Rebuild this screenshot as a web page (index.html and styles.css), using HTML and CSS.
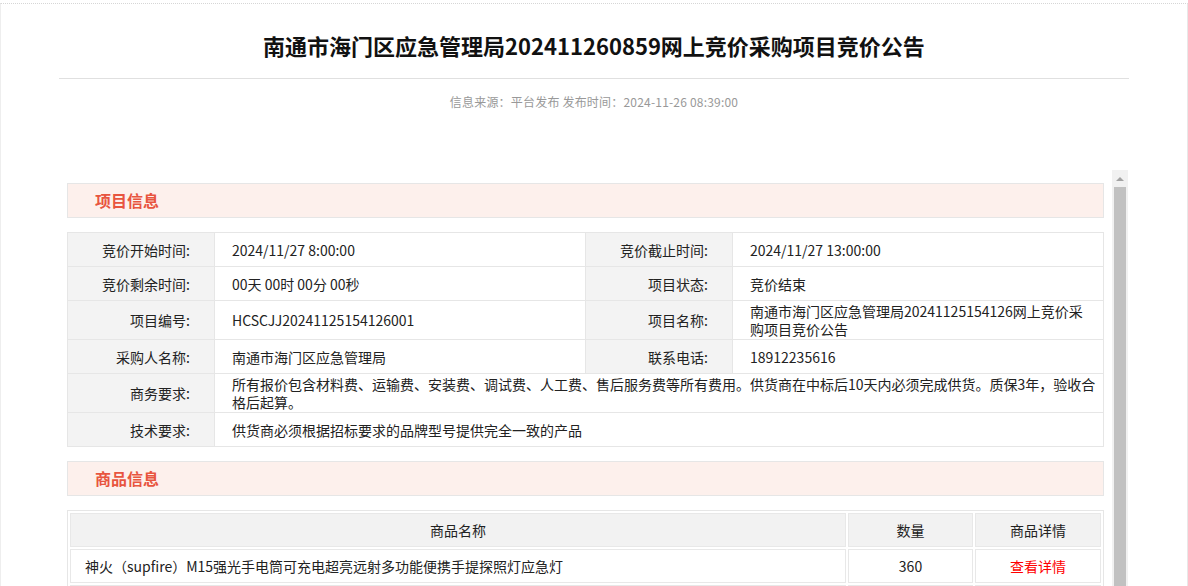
FILE: index.html
```html
<!DOCTYPE html>
<html lang="zh-CN">
<head>
<meta charset="utf-8">
<title>竞价公告</title>
<link rel="stylesheet" href="styles.css">
</head>
<body>
<div class="page">
  <div class="head">
    <h1 class="title">南通市海门区应急管理局202411260859网上竞价采购项目竞价公告</h1>
  </div>
  <div class="meta">信息来源：平台发布 发布时间：2024-11-26 08:39:00</div>
  <div class="frame">
    <div class="frame-body">
      <div class="sec-head">项目信息</div>
      <table class="info">
        <colgroup>
          <col class="c-label"><col class="c-val1"><col class="c-label"><col>
        </colgroup>
        <tr>
          <th>竞价开始时间:</th><td>2024/11/27 8:00:00</td>
          <th>竞价截止时间:</th><td>2024/11/27 13:00:00</td>
        </tr>
        <tr>
          <th>竞价剩余时间:</th><td>00天 00时 00分 00秒</td>
          <th>项目状态:</th><td>竞价结束</td>
        </tr>
        <tr>
          <th>项目编号:</th><td>HCSCJJ20241125154126001</td>
          <th>项目名称:</th><td>南通市海门区应急管理局20241125154126网上竞价采购项目竞价公告</td>
        </tr>
        <tr>
          <th>采购人名称:</th><td>南通市海门区应急管理局</td>
          <th>联系电话:</th><td>18912235616</td>
        </tr>
        <tr>
          <th>商务要求:</th><td class="wide" colspan="3">所有报价包含材料费、运输费、安装费、调试费、人工费、售后服务费等所有费用。供货商在中标后10天内必须完成供货。质保3年，验收合格后起算。</td>
        </tr>
        <tr>
          <th>技术要求:</th><td class="wide" colspan="3">供货商必须根据招标要求的品牌型号提供完全一致的产品</td>
        </tr>
      </table>
      <div class="sec-head">商品信息</div>
      <table class="goods">
        <colgroup>
          <col><col class="c-qty"><col class="c-det">
        </colgroup>
        <tr>
          <th>商品名称</th><th>数量</th><th>商品详情</th>
        </tr>
        <tr>
          <td class="name">神火（supfire）M15强光手电筒可充电超亮远射多功能便携手提探照灯应急灯</td>
          <td class="center">360</td>
          <td class="center"><a class="link" href="#">查看详情</a></td>
        </tr>
        <tr>
          <td class="name">&nbsp;</td><td class="center">&nbsp;</td><td class="center">&nbsp;</td>
        </tr>
      </table>
    </div>
    <div class="scrollbar">
      <div class="sb-btn"><span class="sb-arrow"></span></div>
      <div class="sb-thumb"></div>
    </div>
  </div>
</div>
</body>
</html>
```
FILE: styles.css
```css
html, body {
  margin: 0;
  padding: 0;
  background: #fff;
  height: 586px;
  overflow: hidden;
}
body {
  font-family: "Noto Sans CJK SC", "Liberation Sans", sans-serif;
  color: #333;
  font-size: 14px;
}
.page {
  margin-top: 3px;
  border-top: 1px dotted #d6d6d6;
  border-left: 1px solid #eee;
  border-right: 1px solid #e8e8e8;
  width: 1186px;
  height: 600px;
}
.head {
  margin: 0 58px;
  padding-top: 25px;
  padding-bottom: 17px;
  border-bottom: 1px solid #e0e0e0;
}
.title {
  margin: 0;
  font-size: 22px;
  line-height: 32px;
  font-weight: bold;
  color: #111;
  text-align: center;
}
.meta {
  margin-top: 13px;
  font-size: 12px;
  line-height: 20px;
  color: #999;
  text-align: center;
  letter-spacing: 0.2px;
}
.frame {
  margin: 58px 0 0 58px;
  width: 1069px;
  height: 420px;
  display: flex;
}
.frame-body {
  flex: 1;
  padding: 13px 8px 0 8px;
  overflow: hidden;
}
.sec-head {
  height: 33px;
  line-height: 33px;
  border: 1px solid #e6e6e6;
  background: #fdf0ec;
  color: #e8553f;
  font-size: 16px;
  font-weight: bold;
  padding-left: 27px;
}
.info {
  width: 100%;
  border-collapse: collapse;
  margin: 14px 0 14px;
  table-layout: fixed;
}
.info .c-label { width: 147px; }
.info .c-val1 { width: 371px; }
.info tr { height: 34px; }
.info th, .info td {
  border: 1px solid #e6e6e6;
  line-height: 18px;
  font-weight: normal;
  padding: 1px 17px;
  color: #222;
}
.info th {
  background: #f3f3f3;
  text-align: right;
  padding-right: 24px;
}
.info td {
  text-align: left;
  padding-right: 12px;
}
.info td.wide {
  padding-right: 5px;
}
.goods {
  width: 100%;
  margin-top: 14px;
  border: 1px solid #e6e6e6;
  border-spacing: 2px;
  table-layout: fixed;
}
.goods .c-qty { width: 125px; }
.goods .c-det { width: 126px; }
.goods tr { height: 34px; }
.goods th, .goods td {
  border: 1px solid #e8e8e8;
  font-weight: normal;
  line-height: 18px;
  padding: 6px 14px;
  color: #222;
}
.goods th {
  background: #f2f2f2;
  text-align: center;
}
.goods td.center { text-align: center; }
.link {
  color: #f00;
  text-decoration: none;
}
.scrollbar {
  width: 16px;
  background: #f1f1f1;
  display: flex;
  flex-direction: column;
  align-items: center;
}
.sb-btn {
  height: 17px;
  width: 16px;
  display: flex;
  justify-content: center;
  align-items: center;
}
.sb-arrow {
  width: 0;
  height: 0;
  border-left: 4px solid transparent;
  border-right: 4px solid transparent;
  border-bottom: 4px solid #a3a3a3;
}
.sb-thumb {
  width: 12px;
  flex: 1;
  background: #c1c1c1;
}
```
